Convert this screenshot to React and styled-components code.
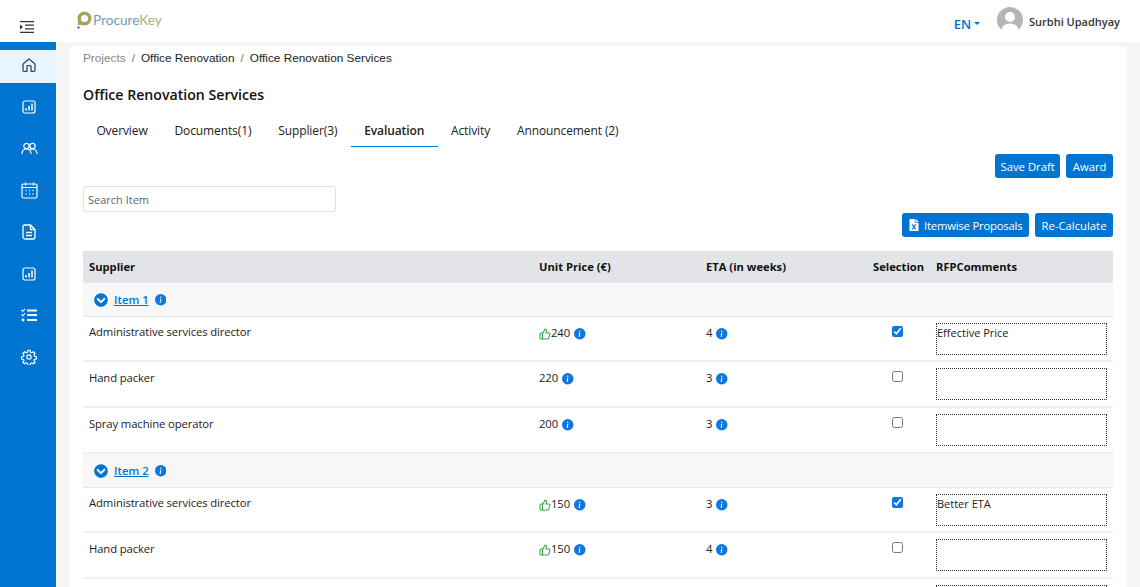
import React from 'react';
import styled, { createGlobalStyle } from 'styled-components';
import { ThumbsUp } from 'lucide-react';
import { BsInfoCircleFill } from 'react-icons/bs';
import { FaChevronCircleDown, FaFileExcel } from 'react-icons/fa';

const GlobalStyle = createGlobalStyle`
  html, body {
    margin: 0;
    height: 587px;
    overflow: hidden;
    background: #f5f5f5;
    font-family: "Open Sans", "Noto Sans", sans-serif;
    color: #212529;
  }
  * { box-sizing: border-box; }
`;

const Topbar = styled.header`
  height: 42px;
  background: #fff;
  display: flex;
  align-items: center;
  padding-right: 20px;
`;

const MenuToggle = styled.div`
  width: 56px;
  display: flex;
  justify-content: center;
  padding-top: 11px;
  padding-right: 3px;
`;

const Logo = styled.div`
  display: flex;
  align-items: center;
  margin-left: 20px;
  padding-bottom: 2px;
  font-family: Lato, sans-serif;
  font-size: 13.6px;
  color: #6f9cb8;
  height: 100%;
  span { color: #adb07c; }
`;

const LogoMark = styled.svg`
  width: 16px;
  height: 19px;
  margin-right: 1px;
`;

const UserArea = styled.div`
  margin-left: auto;
  display: flex;
  align-items: center;
`;

const Lang = styled.div`
  color: #0074d1;
  font-size: 13px;
  font-weight: 600;
  display: flex;
  align-items: center;
  padding-top: 5px;
  &::after {
    content: '';
    margin-left: 3px;
    border-left: 3.5px solid transparent;
    border-right: 3.5px solid transparent;
    border-top: 3.5px solid #0074d1;
  }
`;

const Avatar = styled.svg`
  width: 26px;
  height: 26px;
  margin-left: 17px;
  margin-right: 6px;
  margin-bottom: 2px;
`;

const UserName = styled.div`
  font-size: 11px;
  font-weight: 600;
  color: #333;
`;

const Body = styled.div`
  display: flex;
  height: 545px;
`;

const Sidebar = styled.nav`
  width: 56px;
  flex: none;
  background: #0074d1;
  padding-top: 8px;
  display: flex;
  flex-direction: column;
`;

const NavItem = styled.div`
  height: ${p => (p.$active ? '33px' : '41.7px')};
  margin-bottom: ${p => (p.$active ? '3px' : '0')};
  padding-bottom: ${p => (p.$active ? '3px' : '0')};
  padding-left: 2px;
  display: flex;
  align-items: center;
  justify-content: center;
  background: ${p => (p.$active ? '#e6f5ff' : 'transparent')};
  color: ${p => (p.$active ? '#3c4a54' : '#fff')};
`;

const Card = styled.main`
  width: 1058px;
  margin: 4px 0 0 13px;
  background: #fff;
  border-radius: 8px 8px 0 0;
  padding: 0 14px;
  overflow: hidden;
`;

const Breadcrumb = styled.div`
  font-family: "Liberation Sans", Arial, sans-serif;
  font-size: 11.8px;
  height: 25px;
  padding-bottom: 1px;
  display: flex;
  align-items: center;
  color: #222;
  gap: 6px;
  span:first-child { color: #888; }
  i { font-style: normal; color: #777; }
`;

const Title = styled.h1`
  margin: 0;
  font-size: 14.15px;
  font-weight: 600;
  color: #111;
  padding-top: 14px;
  height: 45px;
`;

const Tabs = styled.div`
  display: flex;
  height: 31px;
`;

const Tab = styled.div`
  padding: 0 13.4px;
  font-size: 12px;
  letter-spacing: -0.1px;
  line-height: 30px;
  color: #222;
  font-weight: ${p => (p.$active ? 600 : 400)};
  border-bottom: 1px solid ${p => (p.$active ? '#0074d1' : 'transparent')};
`;

const Actions = styled.div`
  display: flex;
  justify-content: flex-end;
  gap: 6px;
  margin-top: ${p => p.$top}px;
`;

const Button = styled.button`
  height: 24px;
  padding: 0 ${p => p.$pad || 6.5}px;
  border: 0;
  border-radius: 3px;
  background: #0074d1;
  color: #fff;
  font-family: inherit;
  font-size: 11.3px;
  display: flex;
  align-items: center;
  gap: 3.5px;
`;

const ExportButton = styled(Button)`
  letter-spacing: -0.2px;
`;

const SearchInput = styled.input`
  display: block;
  width: 253px;
  height: 26px;
  margin-top: 8px;
  padding: 0 4px;
  border: 1px solid #e0e0e0;
  border-radius: 3px;
  font-family: inherit;
  font-size: 11px;
  &::placeholder { color: #666; opacity: 1; }
`;

const cols = '450px 167px 167px 63px 183px';

const Grid = styled.div`
  display: grid;
  grid-template-columns: ${cols};
  width: 1030px;
`;

const HeadRow = styled(Grid)`
  margin-top: 14px;
  height: 32px;
  padding-bottom: 2px;
  background: #e3e4e8;
  align-items: center;
  font-size: 11.2px;
  font-weight: 700;
  color: #111;
  > div { padding-left: 6px; white-space: nowrap; }
`;

const ItemRow = styled.div`
  height: 34px;
  display: flex;
  align-items: center;
  padding-left: 11px;
  background: #f7f7f7;
  border-bottom: 1px solid #e8e8e8;
  font-size: 11.3px;
  font-weight: 600;
  color: #0074d1;
  a { margin: 0 6px 0 6px; color: inherit; text-decoration: underline; }
`;

const Row = styled(Grid)`
  height: ${p => p.$h}px;
  border-bottom: 2px solid #efefef;
  font-size: 11.3px;
  letter-spacing: -0.12px;
  color: #222;
`;

const Cell = styled.div`
  padding: 8px 0 0 6px;
  display: flex;
  align-items: flex-start;
  line-height: 15px;
`;

const NameCell = styled(Cell)`
  padding-top: ${p => (p.$first ? 7 : 8)}px;
`;

const Info = styled(BsInfoCircleFill)`
  color: #0d76e0;
  width: 11.5px;
  height: 11.5px;
  margin: 3px 0 0 4px;
  flex: none;
`;

const ItemInfo = styled(Info)`
  margin: 1px 0 0 0;
`;

const Thumb = styled(ThumbsUp)`
  color: #3fa84f;
  width: 12px;
  height: 12px;
  margin-top: 3px;
`;

const CheckCell = styled(Cell)`
  padding: 9px 0 0 25px;
`;

const Check = styled.input`
  margin: 0;
  width: 11px;
  height: 11px;
  accent-color: #0d76e0;
`;

const CommentCell = styled.div`
  grid-column: 5;
`;

const Comment = styled.textarea`
  display: block;
  width: 171px;
  height: 32px;
  margin: 6px 0 0 6px;
  padding: 1px 0;
  border: 1px dotted #333;
  border-radius: 0;
  resize: none;
  outline: none;
  font-family: inherit;
  font-size: 11px;
  line-height: 15px;
  color: #222;
`;

const Home = () => (
  <svg width="16" height="16" viewBox="0 0 24 24" fill="none" stroke="currentColor" strokeWidth="2" strokeLinejoin="round">
    <path d="M3 10.500 12 3l9 7.500V20a1.500 1.500 0 0 1-1.500 1.500H15V14a1 1 0 0 0-1-1h-4a1 1 0 0 0-1 1v7.500H4.500A1.500 1.500 0 0 1 3 20z" />
  </svg>
);

const Report = () => (
  <svg width="14" height="14" viewBox="0 0 14 14" fill="none" stroke="currentColor" strokeWidth="1.200">
    <rect x="1" y="1" width="12" height="12" rx="2" />
    <path d="M4 10.500V8M7 10.500V6M10 10.500V3.500" strokeWidth="1.500" />
  </svg>
);

const People = () => (
  <svg width="17" height="14" viewBox="0 0 17 14" fill="none" stroke="currentColor" strokeWidth="1.200">
    <circle cx="5.500" cy="4" r="2.700" />
    <circle cx="11.500" cy="4" r="2.700" />
    <path d="M1 12c0-3 1.800-5 4.500-5S10 9 10 12M9 7.500c.7-.4 1.600-.5 2.500-.5 2.700 0 4.500 2 4.500 5" />
  </svg>
);

const Calendar = () => (
  <svg width="17" height="17" viewBox="0 0 17 17" fill="none" stroke="currentColor" strokeWidth="1.200">
    <rect x="1" y="2" width="15" height="14" rx="1.500" />
    <path d="M1 5.500h15M4.500 .5v3M12.500 .5v3" />
    <path d="M4.500 8.500h1M8 8.500h1M11.500 8.500h1M4.500 12h1M8 12h1M11.500 12h1" strokeWidth="1.500" />
  </svg>
);

const Doc = () => (
  <svg width="14" height="16" viewBox="0 0 14 16" fill="none" stroke="currentColor" strokeWidth="1.300" strokeLinejoin="round">
    <path d="M2.500 1h6L13 5.500V13a2 2 0 0 1-2 2H3a2 2 0 0 1-2-2V2.500A1.500 1.500 0 0 1 2.500 1zM8.500 1v4.500H13" />
    <path d="M4 8.500h6M4 11.500h6" />
  </svg>
);

const Checklist = () => (
  <svg width="16" height="14" viewBox="0 0 16 14" fill="none" stroke="currentColor" strokeWidth="2">
    <path d="M6 2.500h10M6 7h10M6 12h10" />
    <path d="M.5 2 1.800 3.300 4 .8M.5 6.500 1.800 7.800 4 5.300" strokeWidth="1.100" />
    <circle cx="2" cy="12" r="1.400" fill="currentColor" stroke="none" />
  </svg>
);

const Gear = () => (
  <svg width="16" height="16" viewBox="0 0 24 24" fill="none" stroke="currentColor" strokeWidth="1.800" strokeLinejoin="round">
    <circle cx="12" cy="12" r="3.200" />
    <path d="M10.300 2h3.400l.6 2.900 1.900.8 2.500-1.600 2.400 2.400-1.600 2.500.8 1.900 2.900.6v3.400l-2.900.6-.8 1.900 1.600 2.500-2.400 2.400-2.500-1.600-1.900.8-.6 2.900h-3.400l-.6-2.900-1.900-.8-2.500 1.600-2.400-2.400 1.600-2.500-.8-1.900-2.900-.6v-3.400l2.900-.6.8-1.900-1.600-2.500 2.400-2.400 2.500 1.600 1.900-.8z" />
  </svg>
);

const navIcons = [Home, Report, People, Calendar, Doc, Report, Checklist, Gear];

const rows1 = [
  { name: 'Administrative services director', price: '240', up: true, eta: '4', on: true, note: 'Effective Price', h: 45 },
  { name: 'Hand packer', price: '220', eta: '3', h: 46 },
  { name: 'Spray machine operator', price: '200', eta: '3', h: 46 },
];

const rows2 = [
  { name: 'Administrative services director', price: '150', up: true, eta: '3', on: true, note: 'Better ETA', h: 45 },
  { name: 'Hand packer', price: '150', up: true, eta: '4', h: 46 },
];

const SupplierRow = ({ row }) => (
  <Row $h={row.h}>
    <NameCell $first={row.on}>{row.name}</NameCell>
    <Cell>
      {row.up && <Thumb strokeWidth={2.2} />}
      {row.price}
      <Info />
    </Cell>
    <Cell>
      {row.eta}
      <Info />
    </Cell>
    <CheckCell>
      <Check type="checkbox" defaultChecked={row.on} />
    </CheckCell>
    <CommentCell>
      <Comment defaultValue={row.note || ''} />
    </CommentCell>
  </Row>
);

const App = () => (
  <>
    <GlobalStyle />
    <Topbar>
      <MenuToggle>
        <svg width="14" height="12" viewBox="0 0 14 12" fill="none" stroke="#333" strokeWidth="1.300">
          <path d="M0 .7h14M5 4.200h9M5 7.800h9M0 11.300h14" />
          <path d="M0 3.500 3 6 0 8.500z" fill="#333" stroke="none" />
        </svg>
      </MenuToggle>
      <Logo>
        <LogoMark viewBox="0 0 16 19">
          <circle cx="8.500" cy="7.500" r="5.300" fill="none" stroke="#a3a65a" strokeWidth="3.400" />
          <path d="M2 8v6h3V8z" fill="#a3a65a" />
          <circle cx="2.500" cy="16.500" r="1.200" fill="#2d83c4" />
        </LogoMark>
        Procure<span>Key</span>
      </Logo>
      <UserArea>
        <Lang>EN</Lang>
        <Avatar viewBox="0 0 26 26">
          <circle cx="13" cy="13" r="13" fill="#b5b5b5" />
          <circle cx="13" cy="10" r="5" fill="#fff" />
          <path d="M4 26c0-6 3-9.500 9-9.500s9 3.500 9 9.500z" fill="#fff" />
        </Avatar>
        <UserName>Surbhi Upadhyay</UserName>
      </UserArea>
    </Topbar>
    <Body>
      <Sidebar>
        {navIcons.map((Icon, i) => (
          <NavItem key={i} $active={i === 0}>
            <Icon />
          </NavItem>
        ))}
      </Sidebar>
      <Card>
        <Breadcrumb>
          <span>Projects</span>
          <i>/</i>
          <span>Office Renovation</span>
          <i>/</i>
          <span>Office Renovation Services</span>
        </Breadcrumb>
        <Title>Office Renovation Services</Title>
        <Tabs>
          <Tab>Overview</Tab>
          <Tab>Documents(1)</Tab>
          <Tab>Supplier(3)</Tab>
          <Tab $active>Evaluation</Tab>
          <Tab>Activity</Tab>
          <Tab>Announcement (2)</Tab>
        </Tabs>
        <Actions $top={7}>
          <Button $pad={5.5}>Save Draft</Button>
          <Button>Award</Button>
        </Actions>
        <SearchInput placeholder="Search Item" />
        <Actions $top={1}>
          <ExportButton>
            <FaFileExcel size={12} />
            Itemwise Proposals
          </ExportButton>
          <Button>Re-Calculate</Button>
        </Actions>
        <HeadRow>
          <div>Supplier</div>
          <div>Unit Price (€)</div>
          <div>ETA (in weeks)</div>
          <div>Selection</div>
          <div>RFPComments</div>
        </HeadRow>
        <ItemRow>
          <FaChevronCircleDown size={14} />
          <a href="#item1">Item 1</a>
          <ItemInfo />
        </ItemRow>
        {rows1.map(r => <SupplierRow key={r.name} row={r} />)}
        <ItemRow>
          <FaChevronCircleDown size={14} />
          <a href="#item2">Item 2</a>
          <ItemInfo />
        </ItemRow>
        {rows2.map(r => <SupplierRow key={r.name} row={r} />)}
        <Row $h={46}>
          <CommentCell>
            <Comment />
          </CommentCell>
        </Row>
      </Card>
    </Body>
  </>
);

export default App;
